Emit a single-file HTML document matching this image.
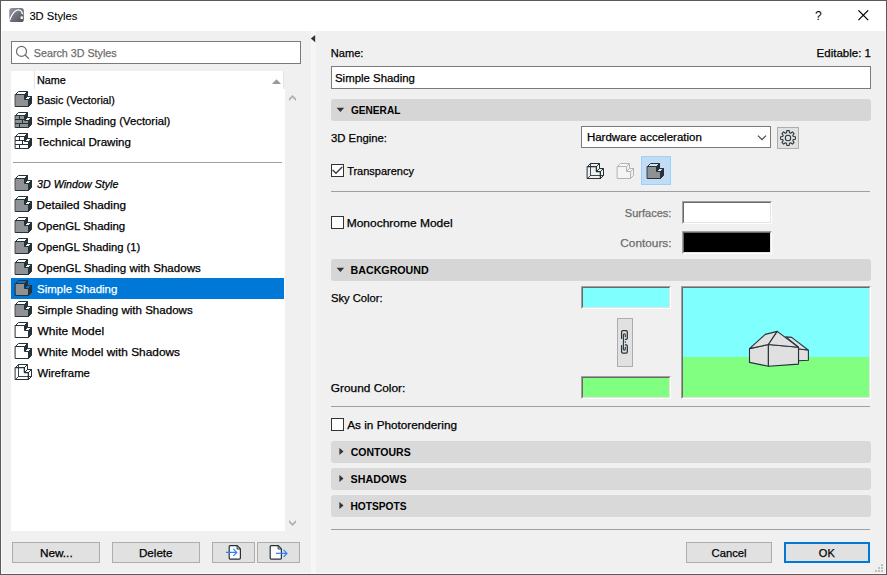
<!DOCTYPE html>
<html><head><meta charset="utf-8"><title>3D Styles</title>
<style>
html,body{margin:0;padding:0;background:#f0f0f0;}
body{width:887px;height:575px;overflow:hidden;font-family:"Liberation Sans", sans-serif;font-size:12px;color:#000;}
#w{position:relative;width:887px;height:575px;background:#f0f0f0;overflow:hidden;}
#w div,#w span,#w svg{position:absolute;box-sizing:border-box;}
.t{white-space:nowrap;line-height:14px;height:14px;transform-origin:0 0;-webkit-text-stroke:0.25px currentColor;}
.btn{background:#e1e1e1;border:1px solid #adadad;}
.hdr{background:#d6d6d6;border-radius:3px;left:331px;width:540px;height:22px;}
.hdr2{background:#d9d9d9;}
.hr{left:331px;width:539px;height:1px;background:#a0a0a0;}
.cb{width:13px;height:13px;background:#fff;border:1px solid #333;left:331px;}
.sw{border:1px solid;border-color:#a0a0a0 #fff #fff #a0a0a0;}
.sw i{position:absolute;display:block;left:0;top:0;right:0;bottom:0;border:1px solid;border-color:#696969 #e3e3e3 #e3e3e3 #696969;}
.ic{width:17px;height:16px;}
</style></head><body><div id="w">
<div style="left:0;top:0;width:887px;height:31px;background:#fff"></div>
<div style="left:311px;top:31px;width:5px;height:543px;background:#f6f6f6"></div>
<svg style="left:310px;top:35px" width="6" height="8" viewBox="0 0 6 8"><path d="M.8 3.6L5.2 0V7.2Z" fill="#333"/></svg>
<svg style="left:9px;top:8px" width="15" height="14" viewBox="0 0 15 14"><defs><linearGradient id="g" x1="0" y1="0" x2="1" y2="1"><stop offset="0" stop-color="#9a9aa6"/><stop offset=".55" stop-color="#6e6e78"/><stop offset="1" stop-color="#4e4e57"/></linearGradient></defs><rect x=".3" y="0" width="14.5" height="14" rx="2.6" fill="url(#g)"/><path d="M.4 12.6C3 5.5 6.5 1.8 9.6 1.9c2.3.2 3.6 2 3.8 4.3" fill="none" stroke="#fff" stroke-width="1.35"/><rect x="11.6" y="8.4" width="2.2" height="2.6" fill="#fff"/></svg>
<svg style="left:858px;top:10px" width="11" height="11" viewBox="0 0 11 11"><path d="M.4 .3L10.2 10.1M10.2 .3L.4 10.1" stroke="#000" stroke-width="1.2" fill="none"/></svg>
<div style="left:11px;top:41px;width:290px;height:23px;background:#fff;border:1px solid #7a7a7a"></div>
<svg style="left:15px;top:45px" width="16" height="16" viewBox="0 0 16 16"><circle cx="6.5" cy="6.4" r="5" fill="none" stroke="#6d6d6d" stroke-width="1.2"/><path d="M10.1 10L14 13.9" stroke="#6d6d6d" stroke-width="1.3" fill="none"/></svg>
<div style="left:11px;top:71px;width:272px;height:18px;background:#fff"></div>
<div style="left:11px;top:89px;width:274px;height:442px;background:#fff"></div>
<div style="left:34px;top:71px;width:1px;height:18px;background:#e5e5e5"></div>
<svg style="left:272px;top:79px" width="9" height="5" viewBox="0 0 9 5"><path d="M0 5L4.5 .2L9 5Z" fill="#999"/></svg>
<div style="left:283px;top:71px;width:1px;height:18px;background:#e5e5e5"></div>
<div style="left:13px;top:162px;width:269px;height:1px;background:#a0a0a0"></div>
<div style="left:11px;top:278px;width:273px;height:21px;background:#0078d7"></div>
<div class="ic" style="left:15px;top:91px"><svg width="17" height="16" viewBox="0 0 17 16" style="position:absolute;left:0;top:0;overflow:visible"><g stroke="#26323a" stroke-width="1" stroke-linejoin="round" stroke-linecap="round"><path d="M.5 3.5L3.5 .5H12.5L9.5 3.5Z" fill="#fff"/><path d="M9.5 3.5L12.5 .5V5.5L9.5 8.5Z" fill="#26323a"/><path d="M9.5 8.5L12.5 5.5H16.5L13.5 8.5Z" fill="#fff"/><path d="M13.5 8.5L16.5 5.5V12.5L13.5 15.5Z" fill="#26323a"/><path d="M.5 3.5H9.5V8.5H13.5V15.5H.5Z" fill="#8e9294"/></g></svg></div>
<div class="ic" style="left:15px;top:112px"><svg width="17" height="16" viewBox="0 0 17 16" style="position:absolute;left:0;top:0;overflow:visible"><g stroke="#26323a" stroke-width="1" stroke-linejoin="round" stroke-linecap="round"><path d="M.5 3.5L3.5 .5H12.5L9.5 3.5Z" fill="#fff"/><path d="M9.5 3.5L12.5 .5V5.5L9.5 8.5Z" fill="#26323a"/><path d="M9.5 8.5L12.5 5.5H16.5L13.5 8.5Z" fill="#fff"/><path d="M13.5 8.5L16.5 5.5V12.5L13.5 15.5Z" fill="#26323a"/><path d="M.5 3.5H9.5V8.5H13.5V15.5H.5Z" fill="#8e9294"/><path d="M.5 7.5H9.5M.5 11.5H13.5M4.5 3.5V7.5M7.5 7.5V11.5M4.5 11.5V15.5" fill="none" stroke-width="1"/></g></svg></div>
<div class="ic" style="left:15px;top:133px"><svg width="17" height="16" viewBox="0 0 17 16" style="position:absolute;left:0;top:0;overflow:visible"><g stroke="#26323a" stroke-width="1" stroke-linejoin="round" stroke-linecap="round"><path d="M.5 3.5L3.5 .5H12.5L9.5 3.5Z" fill="#fff"/><path d="M9.5 3.5L12.5 .5V5.5L9.5 8.5Z" fill="#26323a"/><path d="M9.5 8.5L12.5 5.5H16.5L13.5 8.5Z" fill="#fff"/><path d="M13.5 8.5L16.5 5.5V12.5L13.5 15.5Z" fill="#26323a"/><path d="M.5 3.5H9.5V8.5H13.5V15.5H.5Z" fill="#fff"/><path d="M.5 7.5H9.5M.5 11.5H13.5M4.5 3.5V7.5M7.5 7.5V11.5M4.5 11.5V15.5" fill="none" stroke-width="1"/></g></svg></div>
<div class="ic" style="left:15px;top:175px"><svg width="17" height="16" viewBox="0 0 17 16" style="position:absolute;left:0;top:0;overflow:visible"><g stroke="#26323a" stroke-width="1" stroke-linejoin="round" stroke-linecap="round"><path d="M.5 3.5L3.5 .5H12.5L9.5 3.5Z" fill="#fff"/><path d="M9.5 3.5L12.5 .5V5.5L9.5 8.5Z" fill="#26323a"/><path d="M9.5 8.5L12.5 5.5H16.5L13.5 8.5Z" fill="#fff"/><path d="M13.5 8.5L16.5 5.5V12.5L13.5 15.5Z" fill="#26323a"/><path d="M.5 3.5H9.5V8.5H13.5V15.5H.5Z" fill="#8e9294"/></g></svg></div>
<div class="ic" style="left:15px;top:196px"><svg width="17" height="16" viewBox="0 0 17 16" style="position:absolute;left:0;top:0;overflow:visible"><g stroke="#26323a" stroke-width="1" stroke-linejoin="round" stroke-linecap="round"><path d="M.5 3.5L3.5 .5H12.5L9.5 3.5Z" fill="#fff"/><path d="M9.5 3.5L12.5 .5V5.5L9.5 8.5Z" fill="#26323a"/><path d="M9.5 8.5L12.5 5.5H16.5L13.5 8.5Z" fill="#fff"/><path d="M13.5 8.5L16.5 5.5V12.5L13.5 15.5Z" fill="#26323a"/><path d="M.5 3.5H9.5V8.5H13.5V15.5H.5Z" fill="#8e9294"/></g></svg></div>
<div class="ic" style="left:15px;top:217px"><svg width="17" height="16" viewBox="0 0 17 16" style="position:absolute;left:0;top:0;overflow:visible"><g stroke="#26323a" stroke-width="1" stroke-linejoin="round" stroke-linecap="round"><path d="M.5 3.5L3.5 .5H12.5L9.5 3.5Z" fill="#fff"/><path d="M9.5 3.5L12.5 .5V5.5L9.5 8.5Z" fill="#26323a"/><path d="M9.5 8.5L12.5 5.5H16.5L13.5 8.5Z" fill="#fff"/><path d="M13.5 8.5L16.5 5.5V12.5L13.5 15.5Z" fill="#26323a"/><path d="M.5 3.5H9.5V8.5H13.5V15.5H.5Z" fill="#8e9294"/></g></svg></div>
<div class="ic" style="left:15px;top:238px"><svg width="17" height="16" viewBox="0 0 17 16" style="position:absolute;left:0;top:0;overflow:visible"><g stroke="#26323a" stroke-width="1" stroke-linejoin="round" stroke-linecap="round"><path d="M.5 3.5L3.5 .5H12.5L9.5 3.5Z" fill="#fff"/><path d="M9.5 3.5L12.5 .5V5.5L9.5 8.5Z" fill="#26323a"/><path d="M9.5 8.5L12.5 5.5H16.5L13.5 8.5Z" fill="#fff"/><path d="M13.5 8.5L16.5 5.5V12.5L13.5 15.5Z" fill="#26323a"/><path d="M.5 3.5H9.5V8.5H13.5V15.5H.5Z" fill="#8e9294"/></g></svg></div>
<div class="ic" style="left:15px;top:259px"><svg width="17" height="16" viewBox="0 0 17 16" style="position:absolute;left:0;top:0;overflow:visible"><g stroke="#26323a" stroke-width="1" stroke-linejoin="round" stroke-linecap="round"><path d="M.5 3.5L3.5 .5H12.5L9.5 3.5Z" fill="#fff"/><path d="M9.5 3.5L12.5 .5V5.5L9.5 8.5Z" fill="#26323a"/><path d="M9.5 8.5L12.5 5.5H16.5L13.5 8.5Z" fill="#fff"/><path d="M13.5 8.5L16.5 5.5V12.5L13.5 15.5Z" fill="#26323a"/><path d="M.5 3.5H9.5V8.5H13.5V15.5H.5Z" fill="#8e9294"/></g></svg></div>
<div class="ic" style="left:15px;top:280px"><svg width="17" height="16" viewBox="0 0 17 16" style="position:absolute;left:0;top:0;overflow:visible"><g stroke="#26323a" stroke-width="1" stroke-linejoin="round" stroke-linecap="round"><path d="M.5 3.5L3.5 .5H12.5L9.5 3.5Z" fill="#0078d7"/><path d="M9.5 3.5L12.5 .5V5.5L9.5 8.5Z" fill="#26323a"/><path d="M9.5 8.5L12.5 5.5H16.5L13.5 8.5Z" fill="#0078d7"/><path d="M13.5 8.5L16.5 5.5V12.5L13.5 15.5Z" fill="#26323a"/><path d="M.5 3.5H9.5V8.5H13.5V15.5H.5Z" fill="#8e9294"/></g></svg></div>
<div class="ic" style="left:15px;top:301px"><svg width="17" height="16" viewBox="0 0 17 16" style="position:absolute;left:0;top:0;overflow:visible"><g stroke="#26323a" stroke-width="1" stroke-linejoin="round" stroke-linecap="round"><path d="M.5 3.5L3.5 .5H12.5L9.5 3.5Z" fill="#fff"/><path d="M9.5 3.5L12.5 .5V5.5L9.5 8.5Z" fill="#26323a"/><path d="M9.5 8.5L12.5 5.5H16.5L13.5 8.5Z" fill="#fff"/><path d="M13.5 8.5L16.5 5.5V12.5L13.5 15.5Z" fill="#26323a"/><path d="M.5 3.5H9.5V8.5H13.5V15.5H.5Z" fill="#8e9294"/></g></svg></div>
<div class="ic" style="left:15px;top:322px"><svg width="17" height="16" viewBox="0 0 17 16" style="position:absolute;left:0;top:0;overflow:visible"><g stroke="#26323a" stroke-width="1" stroke-linejoin="round" stroke-linecap="round"><path d="M.5 3.5L3.5 .5H12.5L9.5 3.5Z" fill="#fff"/><path d="M9.5 3.5L12.5 .5V5.5L9.5 8.5Z" fill="#26323a"/><path d="M9.5 8.5L12.5 5.5H16.5L13.5 8.5Z" fill="#fff"/><path d="M13.5 8.5L16.5 5.5V12.5L13.5 15.5Z" fill="#26323a"/><path d="M.5 3.5H9.5V8.5H13.5V15.5H.5Z" fill="#fff"/></g></svg></div>
<div class="ic" style="left:15px;top:343px"><svg width="17" height="16" viewBox="0 0 17 16" style="position:absolute;left:0;top:0;overflow:visible"><g stroke="#26323a" stroke-width="1" stroke-linejoin="round" stroke-linecap="round"><path d="M.5 3.5L3.5 .5H12.5L9.5 3.5Z" fill="#fff"/><path d="M9.5 3.5L12.5 .5V5.5L9.5 8.5Z" fill="#26323a"/><path d="M9.5 8.5L12.5 5.5H16.5L13.5 8.5Z" fill="#fff"/><path d="M13.5 8.5L16.5 5.5V12.5L13.5 15.5Z" fill="#26323a"/><path d="M.5 3.5H9.5V8.5H13.5V15.5H.5Z" fill="#fff"/></g></svg></div>
<div class="ic" style="left:15px;top:364px"><svg width="17" height="16" viewBox="0 0 17 16" style="position:absolute;left:0;top:0;overflow:visible"><g stroke="#26323a" stroke-width="1" stroke-linejoin="round" stroke-linecap="round"><path d="M3.5 .5V12.5H16.5M3.5 12.5L.5 15.5" fill="none" stroke-width=".9"/><path d="M.5 3.5L3.5 .5H12.5L9.5 3.5Z" fill="none"/><path d="M9.5 3.5L12.5 .5V5.5L9.5 8.5Z" fill="none"/><path d="M9.5 8.5L12.5 5.5H16.5L13.5 8.5Z" fill="none"/><path d="M13.5 8.5L16.5 5.5V12.5L13.5 15.5Z" fill="none"/><path d="M.5 3.5H9.5V8.5H13.5V15.5H.5Z" fill="none"/></g></svg></div>
<svg style="left:289px;top:95px" width="7" height="6" viewBox="0 0 7 6"><path d="M3.5 0L7 3.5V6L3.5 2.5L0 6V3.5Z" fill="#b0b0b0"/></svg>
<svg style="left:289px;top:520px" width="7" height="6" viewBox="0 0 7 6"><path d="M3.5 6L7 2.5V0L3.5 3.5L0 0V2.5Z" fill="#b0b0b0"/></svg>
<div class="btn" style="left:12px;top:542px;width:88px;height:21px"></div>
<div class="btn" style="left:112px;top:542px;width:88px;height:21px"></div>
<div class="btn" style="left:212px;top:542px;width:43px;height:21px"></div>
<div class="btn" style="left:257px;top:542px;width:43px;height:21px"></div>
<svg style="left:224px;top:544px" width="20" height="17" viewBox="0 0 20 17"><path d="M6.2 1.7H13.3L16.4 4.8V14.1Q16.4 15.1 15.4 15.1H6.2Q5.2 15.1 5.2 14.1V2.7Q5.2 1.7 6.2 1.7Z" fill="#fff" stroke="#26323a" stroke-width="1.2" stroke-linejoin="round"/><path d="M13.1 1.9V5H16.2" fill="none" stroke="#26323a" stroke-width="1"/><path d="M1.9 8.4H12.4M9.4 4.9L12.7 8.4L9.4 11.9" fill="none" stroke="#2f80ff" stroke-width="1.25"/></svg>
<svg style="left:266px;top:544px" width="24" height="17" viewBox="0 0 24 17"><path d="M5.2 1.7H12.3L15.4 4.8V14.1Q15.4 15.1 14.4 15.1H5.2Q4.2 15.1 4.2 14.1V2.7Q4.2 1.7 5.2 1.7Z" fill="#fff" stroke="#26323a" stroke-width="1.2" stroke-linejoin="round"/><path d="M12.1 1.9V5H15.2" fill="none" stroke="#26323a" stroke-width="1"/><path d="M10 9.4H20.6M17.6 5.9L20.9 9.4L17.6 12.9" fill="none" stroke="#2f80ff" stroke-width="1.25"/></svg>
<div style="left:331px;top:66px;width:540px;height:23px;background:#fff;border:1px solid #7a7a7a"></div>
<div class="hdr" style="top:99px"></div>
<svg style="left:336px;top:107px" width="9" height="6" viewBox="0 0 9 6"><path d="M.6 .8H8.2L4.4 5Z" fill="#333"/></svg>
<div style="left:581px;top:126px;width:190px;height:22px;background:#fff;border:1px solid #7a7a7a"></div>
<svg style="left:757px;top:134px" width="10" height="7" viewBox="0 0 10 7"><path d="M1 1.6L5 5.6L9 1.6" fill="none" stroke="#444" stroke-width="1.1"/></svg>
<div class="btn" style="left:777px;top:127px;width:22px;height:22px"></div>
<svg style="left:780px;top:130px" width="16" height="16" viewBox="0 0 16 16"><path d="M6.81 0.60L9.19 0.60L9.47 2.70L10.71 3.21L12.39 1.92L14.08 3.61L12.79 5.29L13.30 6.53L15.40 6.81L15.40 9.19L13.30 9.47L12.79 10.71L14.08 12.39L12.39 14.08L10.71 12.79L9.47 13.30L9.19 15.40L6.81 15.40L6.53 13.30L5.29 12.79L3.61 14.08L1.92 12.39L3.21 10.71L2.70 9.47L0.60 9.19L0.60 6.81L2.70 6.53L3.21 5.29L1.92 3.61L3.61 1.92L5.29 3.21L6.53 2.70Z" fill="none" stroke="#26323a" stroke-width="1.05" stroke-linejoin="round"/><circle cx="8" cy="8" r="2.7" fill="none" stroke="#26323a" stroke-width="1.05"/></svg>
<div class="cb" style="top:164px"></div>
<svg style="left:332px;top:165px" width="11" height="11" viewBox="0 0 11 11"><path d="M.9 5.2L4 8.2L9.9 2.3" fill="none" stroke="#3b3b3b" stroke-width="1.35" stroke-linecap="round"/></svg>
<div class="ic" style="left:587px;top:163px"><svg width="17" height="16" viewBox="0 0 17 16" style="position:absolute;left:0;top:0;overflow:visible"><g stroke="#26323a" stroke-width="1" stroke-linejoin="round" stroke-linecap="round"><path d="M3.5 .5V12.5H16.5M3.5 12.5L.5 15.5" fill="none" stroke-width=".9"/><path d="M.5 3.5L3.5 .5H12.5L9.5 3.5Z" fill="none"/><path d="M9.5 3.5L12.5 .5V5.5L9.5 8.5Z" fill="none"/><path d="M9.5 8.5L12.5 5.5H16.5L13.5 8.5Z" fill="none"/><path d="M13.5 8.5L16.5 5.5V12.5L13.5 15.5Z" fill="none"/><path d="M.5 3.5H9.5V8.5H13.5V15.5H.5Z" fill="none"/></g></svg></div>
<div class="ic" style="left:617px;top:163px"><svg width="17" height="16" viewBox="0 0 17 16" style="position:absolute;left:0;top:0;overflow:visible"><g stroke="#b4b4b4" stroke-width="1" stroke-linejoin="round" stroke-linecap="round"><path d="M.5 3.5L3.5 .5H12.5L9.5 3.5Z" fill="#f7f7f7"/><path d="M9.5 3.5L12.5 .5V5.5L9.5 8.5Z" fill="#f0f0f0"/><path d="M9.5 8.5L12.5 5.5H16.5L13.5 8.5Z" fill="#f7f7f7"/><path d="M13.5 8.5L16.5 5.5V12.5L13.5 15.5Z" fill="#f0f0f0"/><path d="M.5 3.5H9.5V8.5H13.5V15.5H.5Z" fill="#f4f4f4"/></g></svg></div>
<div style="left:641px;top:156px;width:30px;height:29px;background:#c2dcf3;border:1px solid #99d1ff"></div>
<div class="ic" style="left:647px;top:163px"><svg width="17" height="16" viewBox="0 0 17 16" style="position:absolute;left:0;top:0;overflow:visible"><g stroke="#26323a" stroke-width="1" stroke-linejoin="round" stroke-linecap="round"><path d="M.5 3.5L3.5 .5H12.5L9.5 3.5Z" fill="#cde4f7"/><path d="M9.5 3.5L12.5 .5V5.5L9.5 8.5Z" fill="#26323a"/><path d="M9.5 8.5L12.5 5.5H16.5L13.5 8.5Z" fill="#cde4f7"/><path d="M13.5 8.5L16.5 5.5V12.5L13.5 15.5Z" fill="#26323a"/><path d="M.5 3.5H9.5V8.5H13.5V15.5H.5Z" fill="#8e9294"/></g></svg></div>
<div class="hr" style="top:191px"></div>
<div class="cb" style="top:216px"></div>
<div class="sw" style="left:682px;top:201px;width:90px;height:23px;background:#fff"><i></i></div>
<div class="sw" style="left:682px;top:231px;width:90px;height:23px;background:#000"><i></i></div>
<div class="hdr" style="top:259px"></div>
<svg style="left:336px;top:267px" width="9" height="6" viewBox="0 0 9 6"><path d="M.6 .8H8.2L4.4 5Z" fill="#333"/></svg>
<div class="sw" style="left:581px;top:286px;width:90px;height:23px;background:#80ffff"><i></i></div>
<div class="sw" style="left:581px;top:376px;width:90px;height:23px;background:#80ff80"><i></i></div>
<div class="btn" style="left:617px;top:318px;width:16px;height:49px"></div>
<svg style="left:615px;top:326px" width="20" height="32" viewBox="0 0 20 32"><g fill="none" stroke="#26323a" stroke-width="1.25" stroke-linecap="round"><path d="M6.6 12.4V5.8Q6.6 4.6 7.8 4.6H11.1Q12.3 4.6 12.3 5.8V12.2Q12.3 13.3 11.2 13.3H10.3"/><path d="M10.3 18.8H11.2Q12.3 18.8 12.3 19.9V26Q12.3 27.2 11.1 27.2H7.8Q6.6 27.2 6.6 26V19.5"/><path d="M10.3 10.8V9Q10.3 7.7 9.35 7.7Q8.4 7.7 8.4 9V22.8Q8.4 24.1 9.35 24.1Q10.3 24.1 10.3 22.8V21.2" stroke-width="1.1"/><circle cx="10.3" cy="15.9" r=".75" fill="#26323a" stroke="none"/></g></svg>
<div class="sw" style="left:681px;top:286px;width:190px;height:113px;background:#80ffff"><i></i></div>
<div style="left:683px;top:357px;width:186px;height:40px;background:#80ff80"></div>
<svg style="left:681px;top:286px" width="190" height="112" viewBox="0 0 190 112"><g fill="#e0e0e0" stroke="#26323a" stroke-width="1.1" stroke-linejoin="round"><polygon points="104.8,50.9 110.7,51.4 127.4,64.3 117.5,63.0 117.5,61.2"/><polygon points="117.5,63.0 127.4,64.3 127.4,74.3 117.5,74.8"/><polygon points="68.5,62.6 87.4,58.5 87.4,80.2 68.5,76.4"/><polygon points="87.4,58.5 117.5,61.2 117.5,78.1 87.4,80.2"/><polygon points="68.5,62.6 84.3,48.4 96.2,45.4 87.4,58.5"/><polygon points="87.4,58.5 96.2,45.4 117.5,61.2"/></g></svg>
<div class="hr" style="top:406px"></div>
<div class="cb" style="top:418px"></div>
<div class="hdr hdr2" style="top:441px"></div>
<svg style="left:339px;top:448px" width="5" height="9" viewBox="0 0 5 9"><path d="M.4 -.1V7.1L4.5 3.5Z" fill="#333"/></svg>
<div class="hdr hdr2" style="top:468px"></div>
<svg style="left:339px;top:475px" width="5" height="9" viewBox="0 0 5 9"><path d="M.4 -.1V7.1L4.5 3.5Z" fill="#333"/></svg>
<div class="hdr hdr2" style="top:495px"></div>
<svg style="left:339px;top:502px" width="5" height="9" viewBox="0 0 5 9"><path d="M.4 -.1V7.1L4.5 3.5Z" fill="#333"/></svg>
<div class="hr" style="top:529px"></div>
<div class="btn" style="left:686px;top:542px;width:86px;height:21px"></div>
<div class="btn" style="left:784px;top:542px;width:86px;height:21px;border:2px solid #0078d7"></div>
<div style="left:881px;top:564px;width:2px;height:2px;background:#bfbfbf"></div><div style="left:878px;top:567px;width:2px;height:2px;background:#bfbfbf"></div><div style="left:881px;top:567px;width:2px;height:2px;background:#bfbfbf"></div><div style="left:875px;top:570px;width:2px;height:2px;background:#bfbfbf"></div><div style="left:878px;top:570px;width:2px;height:2px;background:#bfbfbf"></div><div style="left:881px;top:570px;width:2px;height:2px;background:#bfbfbf"></div>
<span class="t" style="left:29px;top:9px;transform:translate(0.39px,0.00px) scaleX(0.9960);font-size:11.25px;-webkit-text-stroke:0.1px;">3D Styles</span>
<span class="t" style="left:33px;top:45px;transform:translate(0.84px,0.50px) scaleX(0.9520);font-size:11.25px;color:#6d6d6d;">Search 3D Styles</span>
<span class="t" style="left:37px;top:73px;transform:translate(0.00px,0.00px) scaleX(0.9611);font-size:11.25px;">Name</span>
<span class="t" style="left:36px;top:93px;transform:translate(0.99px,0.00px) scaleX(0.9566);font-size:11.25px;">Basic (Vectorial)</span>
<span class="t" style="left:36px;top:114px;transform:translate(0.85px,0.00px) scaleX(1.0062);font-size:11.25px;">Simple Shading (Vectorial)</span>
<span class="t" style="left:37px;top:135px;transform:translate(0.02px,0.00px) scaleX(1.0282);font-size:11.25px;">Technical Drawing</span>
<span class="t" style="left:37px;top:177px;transform:translate(0.09px,0.00px) scaleX(0.9503);font-size:11.25px;font-style:italic;">3D Window Style</span>
<span class="t" style="left:36px;top:198px;transform:translate(0.59px,0.00px) scaleX(1.0429);font-size:11.25px;">Detailed Shading</span>
<span class="t" style="left:37px;top:219px;transform:translate(0.20px,0.00px) scaleX(1.0171);font-size:11.25px;">OpenGL Shading</span>
<span class="t" style="left:37px;top:240px;transform:translate(0.26px,0.00px) scaleX(0.9959);font-size:11.25px;">OpenGL Shading (1)</span>
<span class="t" style="left:37px;top:261px;transform:translate(0.20px,0.00px) scaleX(1.0284);font-size:11.25px;">OpenGL Shading with Shadows</span>
<span class="t" style="left:37px;top:282px;transform:translate(0.08px,0.00px) scaleX(1.0188);font-size:11.25px;color:#fff;">Simple Shading</span>
<span class="t" style="left:37px;top:303px;transform:translate(0.25px,0.00px) scaleX(1.0272);font-size:11.25px;">Simple Shading with Shadows</span>
<span class="t" style="left:37px;top:324px;transform:translate(0.53px,0.00px) scaleX(1.0647);font-size:11.25px;">White Model</span>
<span class="t" style="left:37px;top:345px;transform:translate(0.53px,0.00px) scaleX(1.0549);font-size:11.25px;">White Model with Shadows</span>
<span class="t" style="left:37px;top:366px;transform:translate(0.60px,0.00px) scaleX(1.0086);font-size:11.25px;">Wireframe</span>
<span class="t" style="left:330px;top:46px;transform:translate(0.79px,0.00px) scaleX(0.9853);font-size:11.25px;">Name:</span>
<span class="t" style="left:816px;top:46px;transform:translate(0.62px,0.00px) scaleX(1.0211);font-size:11.25px;">Editable: 1</span>
<span class="t" style="left:334px;top:71px;transform:translate(0.99px,0.00px) scaleX(1.0142);font-size:11.25px;">Simple Shading</span>
<span class="t" style="left:350px;top:103px;transform:translate(0.96px,0.00px) scaleX(0.8987);font-size:11.25px;font-weight:bold;-webkit-text-stroke:0;">GENERAL</span>
<span class="t" style="left:330px;top:131px;transform:translate(0.98px,0.00px) scaleX(1.0061);font-size:11.25px;">3D Engine:</span>
<span class="t" style="left:586px;top:130px;transform:translate(0.89px,0.00px) scaleX(1.0208);font-size:11.25px;">Hardware acceleration</span>
<span class="t" style="left:347px;top:164px;transform:translate(0.15px,0.00px) scaleX(0.9774);font-size:11.25px;">Transparency</span>
<span class="t" style="left:346px;top:216px;transform:translate(0.67px,0.00px) scaleX(1.0653);font-size:11.25px;">Monochrome Model</span>
<span class="t" style="left:624px;top:206px;transform:translate(0.78px,0.00px) scaleX(0.9800);font-size:11.25px;color:#6d6d6d;">Surfaces:</span>
<span class="t" style="left:620px;top:236px;transform:translate(0.34px,0.00px) scaleX(1.0493);font-size:11.25px;color:#6d6d6d;">Contours:</span>
<span class="t" style="left:350px;top:263px;transform:translate(0.55px,0.00px) scaleX(0.9475);font-size:11.25px;font-weight:bold;-webkit-text-stroke:0;">BACKGROUND</span>
<span class="t" style="left:330px;top:291px;transform:translate(0.90px,0.00px) scaleX(0.9970);font-size:11.25px;">Sky Color:</span>
<span class="t" style="left:330px;top:381px;transform:translate(0.81px,0.00px) scaleX(1.0547);font-size:11.25px;">Ground Color:</span>
<span class="t" style="left:347px;top:418px;transform:translate(0.29px,0.00px) scaleX(1.0437);font-size:11.25px;">As in Photorendering</span>
<span class="t" style="left:350px;top:445px;transform:translate(0.66px,0.00px) scaleX(0.9348);font-size:11.25px;font-weight:bold;-webkit-text-stroke:0;">CONTOURS</span>
<span class="t" style="left:350px;top:472px;transform:translate(0.62px,0.00px) scaleX(0.9520);font-size:11.25px;font-weight:bold;-webkit-text-stroke:0;">SHADOWS</span>
<span class="t" style="left:350px;top:499px;transform:translate(0.45px,0.00px) scaleX(0.9056);font-size:11.25px;font-weight:bold;-webkit-text-stroke:0;">HOTSPOTS</span>
<span class="t" style="left:711px;top:546px;transform:translate(0.57px,0.00px) scaleX(0.9981);font-size:11.25px;">Cancel</span>
<span class="t" style="left:818px;top:546px;transform:translate(0.84px,0.00px) scaleX(0.9798);font-size:11.25px;">OK</span>
<span class="t" style="left:39px;top:546px;transform:translate(0.91px,0.00px) scaleX(1.0473);font-size:11.25px;">New...</span>
<span class="t" style="left:138px;top:546px;transform:translate(0.91px,0.00px) scaleX(1.0351);font-size:11.25px;">Delete</span>
<span class="t" style="left:815px;top:8px;transform:translate(0.09px,0.50px) scaleX(0.9684);font-size:12.5px;-webkit-text-stroke:0;">?</span>
<div style="left:1px;top:31px;width:1px;height:543px;background:#fafafa"></div><div style="left:1px;top:573px;width:885px;height:1px;background:#fafafa"></div><div style="left:885px;top:31px;width:1px;height:543px;background:#fafafa"></div><div style="left:0;top:0;width:887px;height:575px;border:1px solid #5a5a5a;border-width:1px 1px 1px 1px"></div>
</div></body></html>
